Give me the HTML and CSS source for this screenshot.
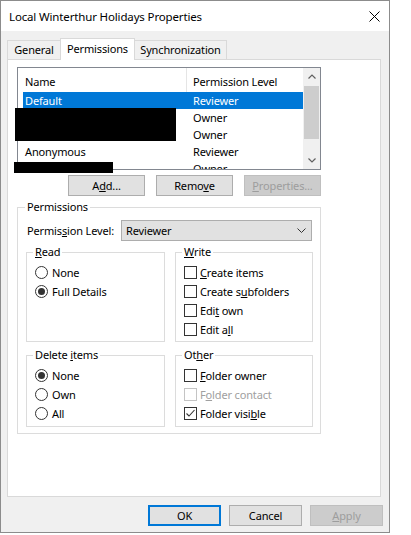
FILE: index.html
```html
<!DOCTYPE html>
<html>
<head>
<meta charset="utf-8">
<link rel="stylesheet" href="styles.css">
</head>
<body>
<div class="window">
  <div class="titlebar">
    <span class="title">Local Winterthur Holidays Properties</span>
    <svg class="close" width="11" height="11" viewBox="0 0 11 11"><path d="M0.5 0.5L10.5 10.5M10.5 0.5L0.5 10.5" stroke="#000" stroke-width="1" fill="none"/></svg>
  </div>
  <div class="client">
    <div class="tabs">
      <div class="tab t-general">General</div>
      <div class="tab t-perm active">Permissions</div>
      <div class="tab t-sync">Synchronization</div>
    </div>
    <div class="panel">
      <div class="listbox">
        <div class="list-main">
          <div class="list-header">
            <div class="hcell hname">Name</div>
            <div class="hcell hlevel">Permission Level</div>
          </div>
          <div class="rows">
            <div class="row selected"><span class="c-name">Default</span><span class="c-level">Reviewer</span></div>
            <div class="row"><span class="c-name"></span><span class="c-level">Owner</span></div>
            <div class="row"><span class="c-name"></span><span class="c-level">Owner</span></div>
            <div class="row"><span class="c-name">Anonymous</span><span class="c-level">Reviewer</span></div>
            <div class="row"><span class="c-name"></span><span class="c-level">Owner</span></div>
          </div>
        </div>
        <div class="vscroll">
          <div class="arrow"><svg width="8" height="5" viewBox="0 0 8 5"><path d="M0.5 4.5L4 1L7.5 4.5" stroke="#606060" stroke-width="1.2" fill="none"/></svg></div>
          <div class="track"><div class="thumb"></div></div>
          <div class="arrow"><svg width="8" height="5" viewBox="0 0 8 5"><path d="M0.5 0.5L4 4L7.5 0.5" stroke="#606060" stroke-width="1.2" fill="none"/></svg></div>
        </div>
      </div>
      <div class="list-buttons">
        <button class="btn lbtn">A<u>d</u>d...</button>
        <button class="btn lbtn">Remo<u>v</u>e</button>
        <button class="btn lbtn disabled"><u>P</u>roperties...</button>
      </div>
      <fieldset class="group perm">
        <legend>Permissions</legend>
        <div class="level-row">
          <span class="level-label">Permis<u>s</u>ion Level:</span>
          <div class="select">
            <span>Reviewer</span>
            <svg width="9" height="5" viewBox="0 0 9 5"><path d="M0.5 0.5L4.5 4.5L8.5 0.5" stroke="#333" stroke-width="1" fill="none"/></svg>
          </div>
        </div>
        <div class="group-row">
          <fieldset class="group sub top w139">
            <legend><u>R</u>ead</legend>
            <div class="item"><span class="radio"></span>None</div>
            <div class="item"><span class="radio on"></span>Full Details</div>
          </fieldset>
          <fieldset class="group sub top w138">
            <legend><u>W</u>rite</legend>
            <div class="item"><span class="check"></span><span><u>C</u>reate items</span></div>
            <div class="item"><span class="check"></span><span>Create s<u>u</u>bfolders</span></div>
            <div class="item"><span class="check"></span><span>Edi<u>t</u> own</span></div>
            <div class="item"><span class="check"></span><span>Edit a<u>l</u>l</span></div>
          </fieldset>
        </div>
        <div class="group-row second">
          <fieldset class="group sub bottom w139">
            <legend>Delete <u>i</u>tems</legend>
            <div class="item"><span class="radio on"></span>None</div>
            <div class="item"><span class="radio"></span>Own</div>
            <div class="item"><span class="radio"></span>All</div>
          </fieldset>
          <fieldset class="group sub bottom w138">
            <legend>Ot<u>h</u>er</legend>
            <div class="item"><span class="check"></span><span><u>F</u>older owner</span></div>
            <div class="item disabled"><span class="check"></span><span>F<u>o</u>lder contact</span></div>
            <div class="item"><span class="check"><svg width="11" height="11" viewBox="0 0 11 11"><path d="M1.5 5.5L4 8L9.5 2" stroke="#333" stroke-width="1.1" fill="none"/></svg></span><span>Folder visi<u>b</u>le</span></div>
          </fieldset>
        </div>
      </fieldset>
    </div>
    <div class="footer">
      <button class="btn fbtn default">OK</button>
      <button class="btn fbtn">Cancel</button>
      <button class="btn fbtn disabled"><u>A</u>pply</button>
    </div>
  </div>
  <div class="redact r1"></div>
  <div class="redact r2"></div>
</div>
</body>
</html>
```
FILE: styles.css
```css
body {
  margin: 0;
  background: #ffffff;
  font-family: "Noto Sans", "Open Sans", sans-serif;
  font-size: 11px;
  letter-spacing: -0.15px;
  color: #000;
}

.window {
  position: relative;
  width: 390px;
  height: 533px;
  box-sizing: border-box;
  border: 1px solid #8c8c8c;
  background: #f0f0f0;
  display: flex;
  flex-direction: column;
}

.titlebar {
  flex: none;
  height: 30px;
  background: #fff;
  display: flex;
  align-items: center;
  justify-content: space-between;
  padding: 0 9px 0 8px;
  font-size: 11.5px;
  letter-spacing: -0.15px;
}

.close { display: block; }

.client {
  flex: 1;
  padding: 7px 6px 0 6px;
  display: flex;
  flex-direction: column;
}

.tabs {
  flex: none;
  display: flex;
  align-items: flex-end;
  height: 21px;
}

.tab {
  height: 19px;
  box-sizing: border-box;
  border: 1px solid #d9d9d9;
  border-bottom: none;
  background: #f0f0f0;
  text-align: center;
  line-height: 18px;
}

.t-general { width: 54px; }
.t-perm { width: 75px; margin-left: -1px; }
.t-sync { width: 93px; margin-left: -1px; }

.tab.active {
  height: 22px;
  margin-bottom: -1px;
  background: #fff;
  line-height: 19px;
  position: relative;
  z-index: 1;
}

.panel {
  flex: none;
  height: 438px;
  box-sizing: border-box;
  border: 1px solid #d9d9d9;
  background: #fff;
  margin-right: 2px;
  padding: 7px 0 0 9px;
}

.listbox {
  width: 304px;
  height: 103px;
  box-sizing: border-box;
  border: 1px solid #828790;
  display: flex;
}

.list-main {
  flex: 1;
  overflow: hidden;
}

.list-header {
  height: 24px;
  display: grid;
  grid-template-columns: 169px 1fr;
}

.hcell {
  padding-top: 6px;
  line-height: 16px;
  box-sizing: border-box;
}

.hname {
  padding-left: 7px;
  border-right: 1px solid #e5e5e5;
}

.hlevel { padding-left: 6px; }

.row {
  height: 17px;
  box-sizing: border-box;
  padding-top: 1px;
  line-height: 16px;
  margin-left: 5px;
  display: grid;
  grid-template-columns: 168px 1fr;
}

.c-name, .c-level { padding-left: 2px; white-space: nowrap; }

.row.selected {
  background: #0078d7;
  color: #fff;
}

.vscroll {
  width: 17px;
  background: #f0f0f0;
  display: flex;
  flex-direction: column;
}

.arrow {
  height: 17px;
  flex: none;
  display: flex;
  align-items: center;
  justify-content: center;
}

.arrow svg { display: block; }

.track {
  flex: 1;
  padding: 1px 1px 0 1px;
}

.thumb {
  height: 53px;
  background: #cdcdcd;
}

.btn {
  height: 21px;
  box-sizing: border-box;
  border: 1px solid #adadad;
  background: #e1e1e1;
  font-family: inherit;
  font-size: inherit;
  letter-spacing: inherit;
  color: #000;
  padding: 0;
  margin: 0;
  line-height: 17px;
}

.btn.disabled {
  background: #cccccc;
  border-color: #bfbfbf;
  color: #9d9d9d;
}

.btn.default {
  border-color: #0078d7;
  box-shadow: inset 0 0 0 1px #0078d7;
}

.list-buttons {
  width: 304px;
  margin-top: 5px;
  display: flex;
  justify-content: flex-end;
  gap: 11px;
}

.lbtn { width: 77px; }

.group {
  margin: 0;
  min-width: 0;
  box-sizing: border-box;
  border: 1px solid #dcdcdc;
  padding: 0 7px 0 8px;
}

.group legend {
  padding: 0 2px;
  height: 16px;
  line-height: 16px;
}

.perm {
  width: 304px;
  height: 235px;
  margin-top: 3px;
}

.perm > legend { margin-left: -1px; }

.level-row {
  margin-top: 5px;
  height: 21px;
  display: flex;
  align-items: center;
}

.level-label {
  width: 94px;
  padding-left: 1px;
}

.select {
  width: 191px;
  height: 21px;
  box-sizing: border-box;
  border: 1px solid #adadad;
  background: #e1e1e1;
  display: flex;
  align-items: center;
  justify-content: space-between;
  padding: 0 5px 0 4px;
}

.select svg { display: block; }

.group-row {
  display: flex;
  gap: 10px;
  margin-top: 3px;
}

.group-row.second { margin-top: 5px; }

.sub { padding: 3px 4px 0 6px; }
.sub.top { height: 98px; }
.sub.bottom { height: 80px; }
.w139 { width: 139px; }
.w138 { width: 138px; }

.item {
  height: 19px;
  display: flex;
  align-items: center;
  gap: 4px;
  padding-left: 2px;
  white-space: nowrap;
}

.item.disabled { color: #a0a0a0; }

.radio {
  width: 13px;
  height: 13px;
  box-sizing: border-box;
  border: 1px solid #333;
  border-radius: 50%;
  background: #fff;
  display: flex;
  align-items: center;
  justify-content: center;
  flex: none;
}

.radio.on::after {
  content: "";
  width: 7px;
  height: 7px;
  border-radius: 50%;
  background: #333;
}

.check {
  width: 13px;
  height: 13px;
  box-sizing: border-box;
  border: 1px solid #333;
  background: #fff;
  flex: none;
  display: flex;
  align-items: center;
  justify-content: center;
  margin-right: -1px;
}

.check svg { display: block; }

.item.disabled .check { border-color: #c4c4c4; }

.footer {
  margin-top: 8px;
  display: flex;
  justify-content: flex-end;
  gap: 8px;
}

.fbtn { width: 73px; }

.redact {
  position: absolute;
  background: #000;
}

.r1 { left: 14px; top: 107px; width: 161px; height: 33px; }
.r2 { left: 13px; top: 161px; width: 99px; height: 11px; }
```
